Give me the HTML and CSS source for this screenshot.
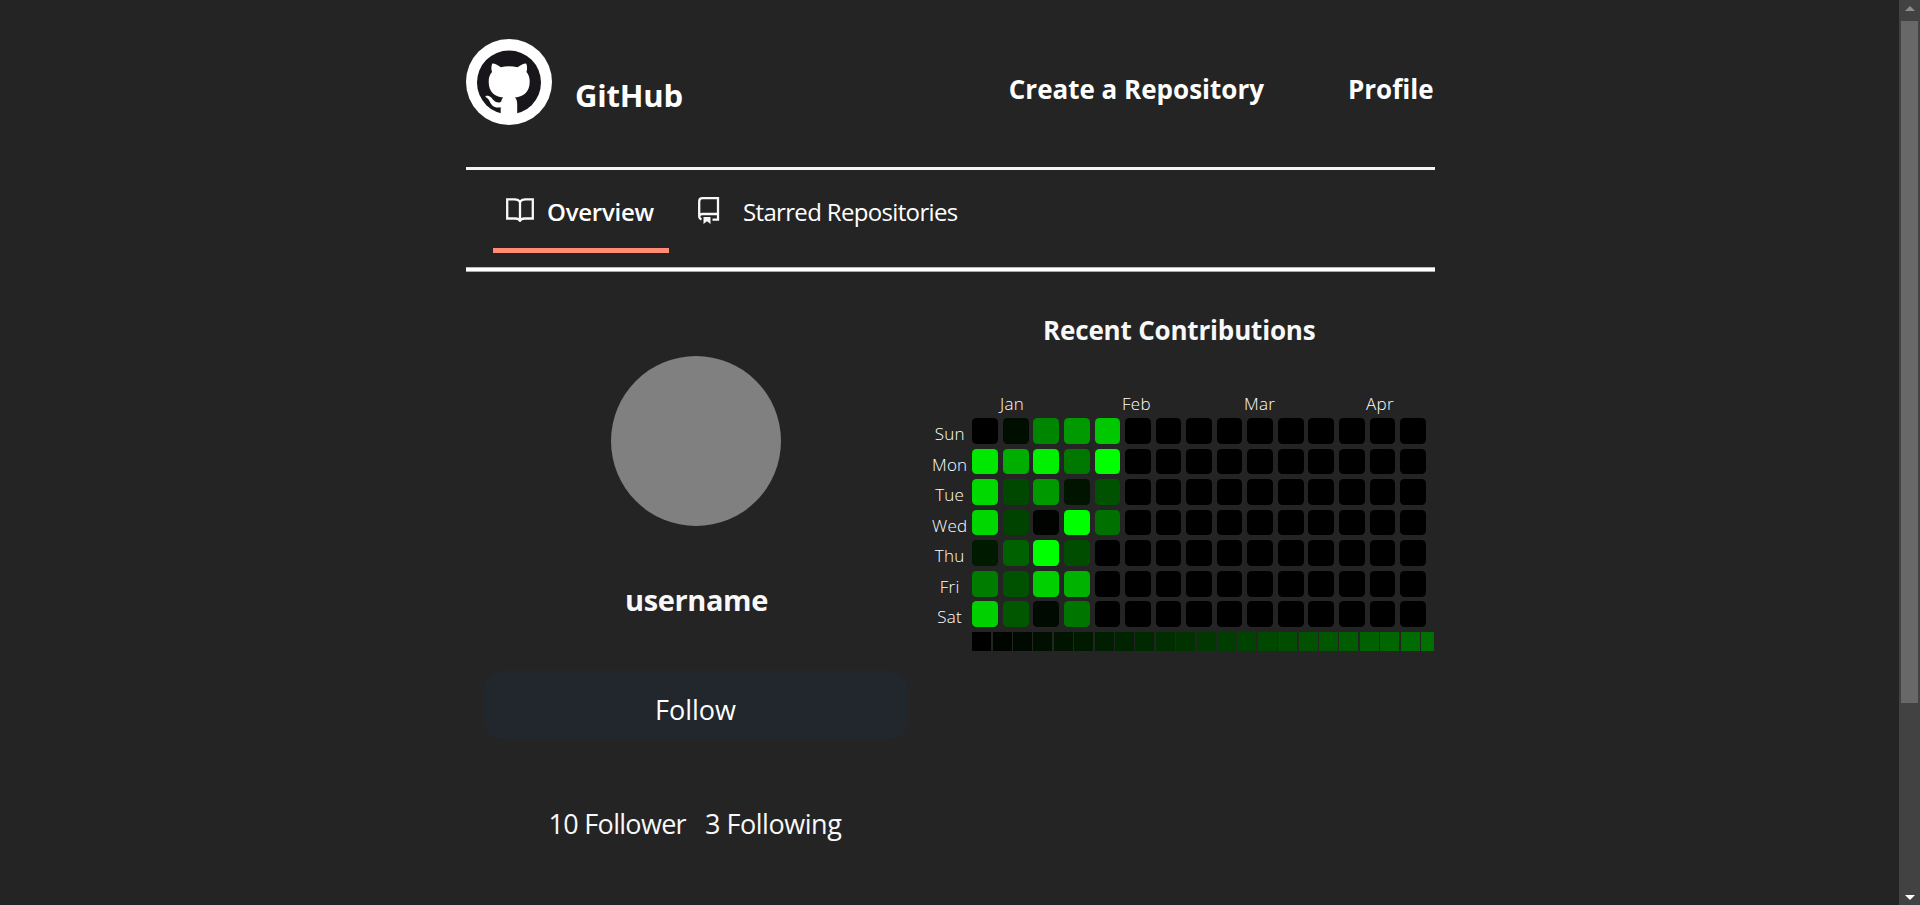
FILE: index.html
```
<!DOCTYPE html>
<html lang="en">
<head>
<meta charset="utf-8">
<title>GitHub profile</title>
<link rel="stylesheet" href="styles.css">
</head>
<body>
<div class="page">
  <header class="header">
    <div class="brand">
      <svg class="logo" viewBox="0 0 86 86"><circle cx="43" cy="43" r="43" fill="#fff"/><circle cx="43" cy="43.500" r="32" fill="#18161a"/><path fill="#fff" d="M34.700 75V68.300C28 69.500 25.500 66.300 23.700 62.500 22.500 60 21 59 19.500 57.800 19 57 20.500 56.500 22 56.700 26 57.200 27 62.500 31 63.300 33 63.700 34.500 63.300 35.200 62.500 35.500 60.500 36.200 59.500 37.200 58.500 28 57.300 22.700 53 22.700 42.500 22.700 38.500 23.700 35.500 26 33 25 30 25.200 27 26.300 24.500 29.500 24.500 32.500 26.500 34.800 28.200 40 26.900 46 26.900 51.500 28.200 54 26.500 57 24.500 60.200 24.500 61.300 27 61.300 30 60.500 33 62.700 35.500 63.700 38.500 63.700 42.500 63.700 53 58 57.300 49 58.500 50.500 60 51.200 62 51.200 65V75Q43 79 34.700 75Z"/></svg>
      <span class="brand-name">GitHub</span>
    </div>
    <nav class="nav"><a>Create a Repository</a><a>Profile</a></nav>
  </header>
  <nav class="tabs">
    <a class="tab tab-active">
      <svg class="icon-book" viewBox="0 0 28 24" fill="none" stroke="#f8f8f8" stroke-width="2.300"><path d="M14 4C13 2 11 1.300 8.500 1.300H1.200V20.500H9.500C12 20.500 13.300 21.300 14 22.700 14.700 21.300 16 20.500 18.500 20.500H26.800V1.300H19.500C17 1.300 15 2 14 4ZM14 4V22"/></svg>
      <span class="overview">Overview</span>
    </a>
    <a class="tab">
      <svg class="icon-repo" viewBox="0 0 22 27" fill="none" stroke="#f8f8f8" stroke-width="2.300"><path d="M3.500 22.300C1.800 21.700 1.200 20.500 1.200 19V4.500Q1.200 1.200 4.500 1.200H20V22.700H14.500M1.200 19Q1.500 17 4.500 17H20"/><path fill="#f8f8f8" stroke="none" d="M5.500 20H12.500V27L9 24.300 5.500 27Z"/></svg>
      <span class="starred">Starred Repositories</span>
    </a>
  </nav>
  <main class="main">
    <section class="profile">
      <div class="avatar"></div>
      <h2 class="username">username</h2>
      <button class="follow">Follow</button>
      <div class="stats"><span class="followers">10 Follower</span><span class="following">3 Following</span></div>
    </section>
    <section class="contrib">
      <h3 class="title">Recent Contributions</h3>
      <div class="months"><span>Jan</span><span>Feb</span><span>Mar</span><span>Apr</span></div>
      <div class="calendar">
        <div class="days"><span>Sun</span><span>Mon</span><span>Tue</span><span>Wed</span><span>Thu</span><span>Fri</span><span>Sat</span></div>
        <div class="cells"></div>
      </div>
      <div class="scale"></div>
    </section>
  </main>
</div>
<aside class="scrollbar"><i class="up"></i><i class="thumb"></i><i class="down"></i></aside>
<script src="app.js"></script>
</body>
</html>
```
FILE: styles.css
```
* { box-sizing: border-box; }
body {
  margin: 0;
  height: 905px;
  overflow: hidden;
  display: flex;
  justify-content: space-between;
  background: #242424;
  color: #fff;
  font-family: "Open Sans", "Noto Sans", sans-serif;
}
.page { width: 968.500px; margin-left: 466px; }
.header {
  height: 170px;
  padding-top: 39px;
  display: flex;
  justify-content: space-between;
  align-items: flex-start;
  border-bottom: 3px solid #f4f4f4;
}
.brand { display: flex; align-items: flex-start; }
.logo { width: 86px; height: 86px; }
.brand-name { margin: 36px 0 0 23px; font-size: 31px; font-weight: 700; line-height: 40px; letter-spacing: -0.2px; }
.nav { margin: 30px 1px 0 0; display: flex; gap: 84px; font-size: 26px; font-weight: 700; line-height: 40px; }
.tabs {
  height: 101px;
  margin-bottom: 1px;
  padding-left: 27px;
  display: flex;
  align-items: flex-start;
  border-bottom: 3px solid #fff;
  box-shadow: 0 1px #aaa, inset 0 -1px #bbb;
}
.tab { height: 83px; padding-top: 22px; display: flex; font-size: 24px; line-height: 40px; }
.tab-active { width: 176px; padding-left: 13px; margin-right: 29px; font-weight: 600; border-bottom: 5px solid #ff8c73; }
.overview { letter-spacing: -0.25px; }
.starred { letter-spacing: -0.66px; }
.icon-book { width: 28px; height: 24px; margin: 6px 13px 0 0; }
.icon-repo { width: 22px; height: 27px; margin: 5px 23px 0 0; }
.main { display: flex; }
.profile { width: 460px; display: flex; flex-direction: column; align-items: center; }
.avatar { width: 170px; height: 170px; margin: 84px 0 0; border-radius: 50%; background: #808080; }
.username { margin: 54px 0 0 1px; font-size: 29px; line-height: 40px; font-weight: 700; letter-spacing: -0.4px; color: #f8f8f8; }
.follow {
  width: 424px; height: 68px; margin: 51px 1px 0 0; padding: 10px 0 0;
  border: 0; border-radius: 17px; background: #21272d;
  color: #fff; font: 400 27px/40px "Open Sans", "Noto Sans", sans-serif;
}
.stats { margin: 65px 2px 0 0; display: flex; gap: 19px; font-size: 27px; line-height: 40px; color: #f8f8f8; }
.followers { letter-spacing: -0.7px; }
.following { letter-spacing: -0.45px; }
.contrib { width: 508.500px; padding-top: 38px; }
.title { margin: 0 2px 0 0; text-align: center; font-size: 26px; line-height: 40px; font-weight: 700; letter-spacing: -0.18px; color: #f8f8f8; }
.months {
  height: 68px;
  padding: 44px 0 0 74px;
  display: grid;
  grid-template-columns: repeat(4, 122px);
  font-size: 17px; line-height: 20px; font-weight: 300; letter-spacing: 0.3px;
}
.calendar { display: flex; }
.days {
  width: 46.300px;
  padding: 1px 0 0 1px;
  display: grid;
  grid-template-rows: repeat(7, 30.580px);
  height: 209.200px;
  text-align: center;
  font-size: 17px; line-height: 30.580px; font-weight: 300; letter-spacing: 0.2px;
}
.cells { display: grid; grid-template-columns: repeat(15, 25.700px); grid-auto-rows: 25.700px; gap: 4.880px; }
.cell { border-radius: 4.500px; }
.scale { width: 462px; height: 19px; margin: 5px 0 0 46.300px; display: flex; gap: 1.400px; overflow: hidden; }
.step { flex: 0 0 19px; }
.scrollbar { width: 21px; height: 905px; padding: 6px 2px 5px; display: flex; flex-direction: column; align-items: center; background: #424242; }
.up { border: 5px solid transparent; border-top: 0; border-bottom-color: #8d8d8d; }
.thumb { width: 17px; height: 682px; margin-top: 10px; background: #686868; }
.down { margin-top: auto; border: 5px solid transparent; border-bottom: 0; border-top-color: #fff; }
```
FILE: app.js
```
const weeks = 15;
const activity = [
  [0, 14, 133, 153, 200],
  [232, 174, 240, 120, 255],
  [217, 72, 153, 20, 82],
  [214, 66, 3, 255, 112],
  [26, 97, 255, 77],
  [125, 82, 207, 178],
  [207, 87, 10, 117]
];
function add(parent, name, green) {
  const el = document.createElement('div');
  el.className = name;
  el.style.background = `rgb(0, ${green}, 0)`;
  parent.append(el);
}
const cells = document.querySelector('.cells');
activity.forEach(row => {
  for (let w = 0; w < weeks; w++) add(cells, 'cell', row[w] || 0);
});
const scale = document.querySelector('.scale');
for (let i = 0; i < 23; i++) add(scale, 'step', Math.round(i * 5.1));
```
